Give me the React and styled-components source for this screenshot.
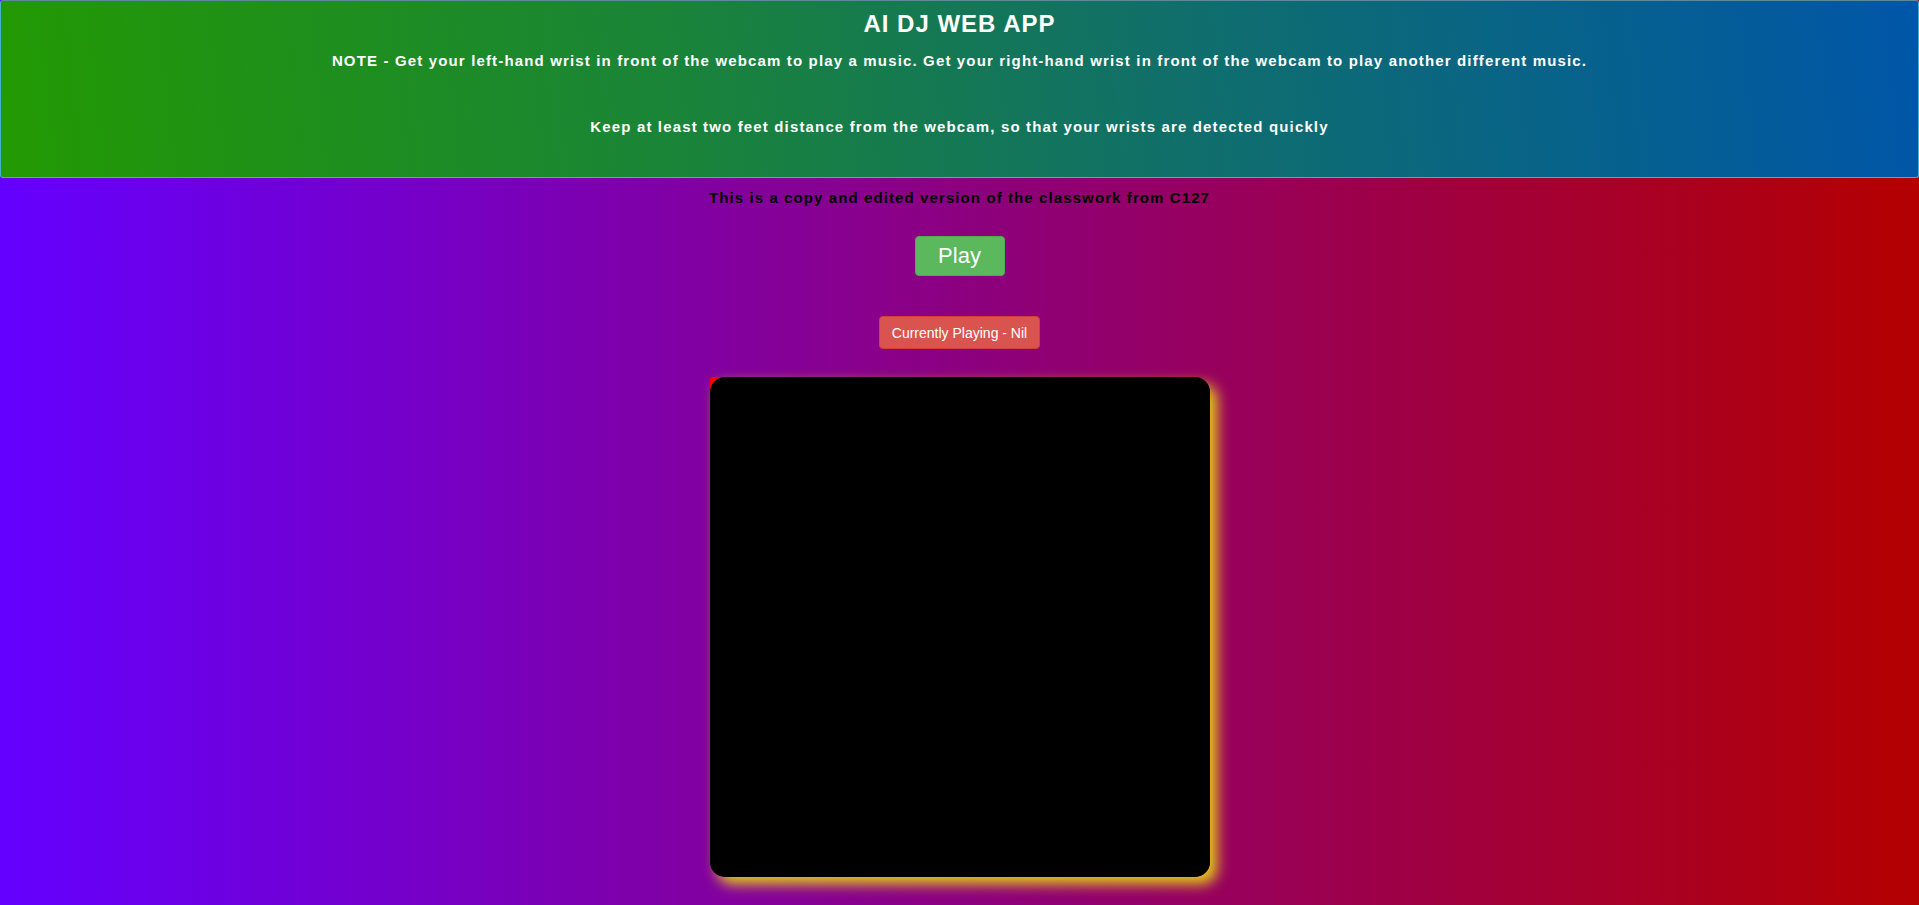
import styled, { createGlobalStyle } from 'styled-components';

const GlobalStyle = createGlobalStyle`
    html, body {
        margin: 0;
        padding: 0;
    }
    body {
        font-family: "Liberation Sans", Arial, Helvetica, sans-serif;
        background: linear-gradient(to right, #6400ff, #b40000);
        min-height: 100vh;
    }
`;

export default function App(){
    return(
        <>
            <GlobalStyle/>
            <Page>
                <Header>
                    <Title>AI DJ WEB APP</Title>
                    <Note>NOTE - Get your left-hand wrist in front of the webcam to play a music. Get your right-hand wrist in front of the webcam to play another different music.</Note>
                    <Note $gap='48px'>Keep at least two feet distance from the webcam, so that your wrists are detected quickly</Note>
                </Header>

                <Credit>This is a copy and edited version of the classwork from C127</Credit>

                <PlayButton>Play</PlayButton>
                <StatusButton>Currently Playing - Nil</StatusButton>

                <Stage>
                    <Screen/>
                </Stage>
            </Page>
        </>
    );
}

const Page = styled.div`
    min-height: 100vh;
    display: flex;
    flex-direction: column;
    align-items: center;
    padding-bottom: 40px;
    box-sizing: border-box;
`;

const Header = styled.header`
    width: 100%;
    height: 178px;
    box-sizing: border-box;
    padding-top: 9px;
    border: 1px solid #3fb2cf;
    border-top-color: #5d8a9a;
    border-radius: 3px;
    background: linear-gradient(84deg, #229a02 0%, #1a8438 35%, #107068 60%, #0056a8 100%);
    color: #ffffff;
    text-align: center;
`;

const Title = styled.h1`
    margin: 0;
    font-size: 24px;
    line-height: 28px;
    letter-spacing: 1px;
    font-weight: bold;
`;

const Note = styled.p`
    margin: ${p => p.$gap || '14px'} 0 0 0;
    font-size: 15px;
    line-height: 18px;
    font-weight: bold;
    letter-spacing: 1.15px;
`;

const Credit = styled.p`
    margin: 11px 0 0 0;
    font-size: 15px;
    line-height: 18px;
    font-weight: bold;
    letter-spacing: 1.1px;
    color: #000000;
`;

const PlayButton = styled.button`
    margin-top: 29px;
    width: 90px;
    height: 40px;
    border: 1px solid #4cae4c;
    border-radius: 4px;
    background-color: #5cb85c;
    color: #ffffff;
    font-family: "Liberation Sans", Arial, Helvetica, sans-serif;
    font-size: 22px;
    cursor: pointer;
`;

const StatusButton = styled.button`
    margin-top: 40px;
    height: 33px;
    padding: 0 12px;
    border: 1px solid #d43f3a;
    border-radius: 4px;
    background-color: #d9534f;
    color: #ffffff;
    font-family: "Liberation Sans", Arial, Helvetica, sans-serif;
    font-size: 14px;
`;

const Stage = styled.div`
    margin-top: 28px;
    width: 500px;
    height: 500px;
    border-radius: 2px 15px 15px 15px;
    background: linear-gradient(135deg, #ff0000 0 26px, transparent 26px);
    box-shadow: 7px 7px 14px #e4d014;
`;

const Screen = styled.div`
    width: 100%;
    height: 100%;
    border-radius: 15px;
    background-color: #000000;
`;
